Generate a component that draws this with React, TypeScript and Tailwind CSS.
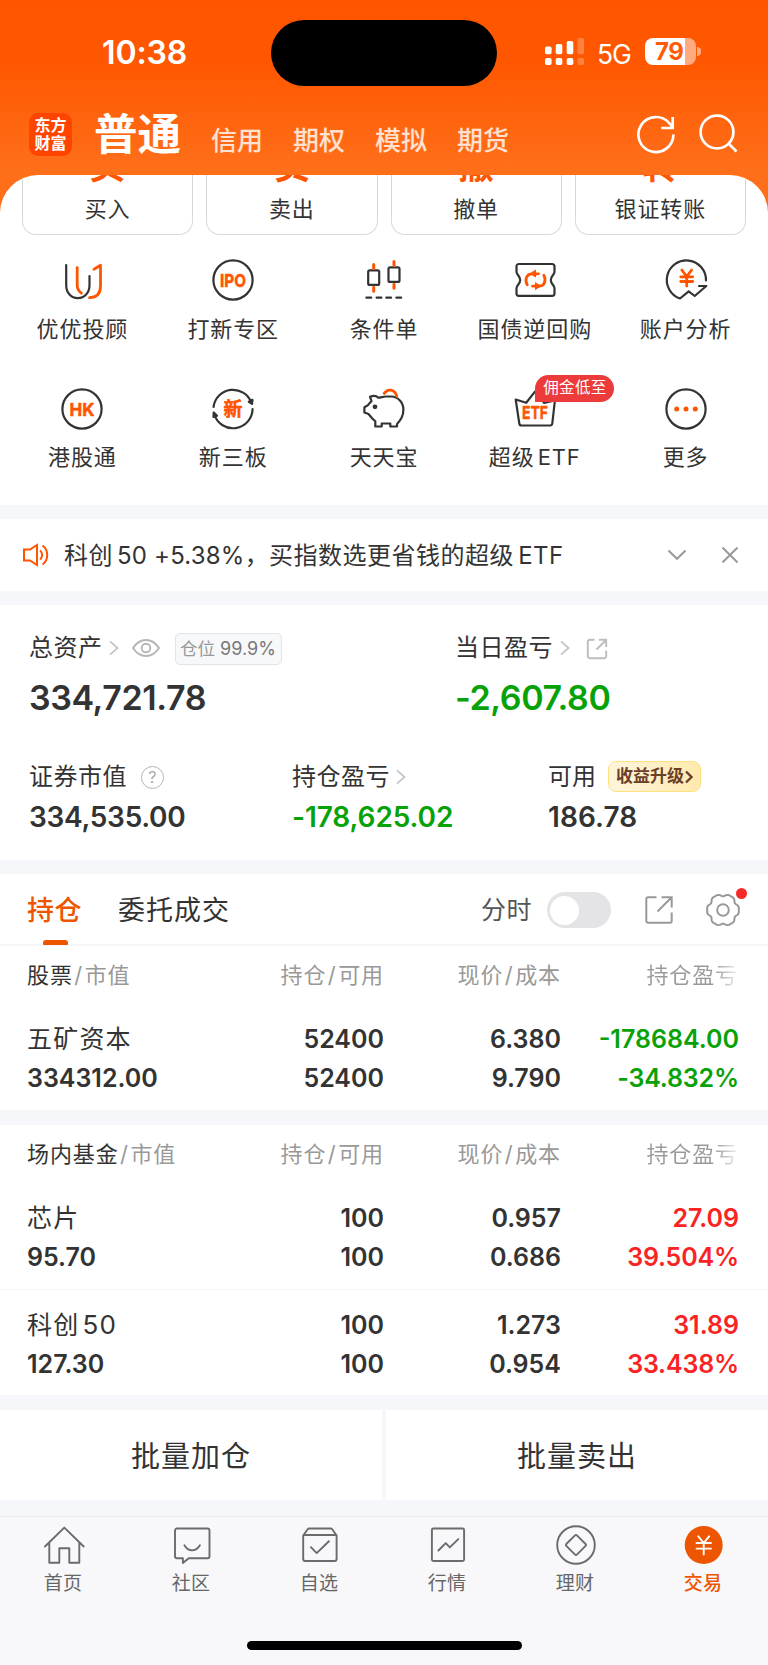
import type { ReactNode } from "react";

const DARK = "#333333";
const ORANGE = "#ff5500";

type Shortcut = {
  label: ReactNode;
  icon: ReactNode;
  badge?: string;
};

type Holding = {
  name: ReactNode;
  value: string;
  amount: string;
  available: string;
  price: string;
  cost: string;
  profit: string;
  rate: string;
  tone: string;
};

type TabItem = {
  label: string;
  icon: ReactNode;
  active?: boolean;
};

function Icon({ children, stroke = DARK, width = 2.2 }: { children: ReactNode; stroke?: string; width?: number }) {
  return (
    <svg
      viewBox="0 0 42 42"
      className="block h-[42px] w-[42px] overflow-visible"
      fill="none"
      stroke={stroke}
      strokeWidth={width}
      strokeLinecap="round"
      strokeLinejoin="round"
    >
      {children}
    </svg>
  );
}

function IconText({ children, width, size = 18, y = 27.6 }: { children: string; width: number; size?: number; y?: number }) {
  return (
    <text
      x="21"
      y={y}
      textAnchor="middle"
      textLength={width}
      lengthAdjust="spacingAndGlyphs"
      fill={ORANGE}
      stroke={ORANGE}
      strokeWidth="0.5"
      fontSize={size}
      fontWeight="700"
      fontFamily="Inter, 'Noto Sans CJK SC', sans-serif"
    >
      {children}
    </text>
  );
}

const shortcuts: Shortcut[] = [
  {
    label: "优优投顾",
    icon: (
      <Icon>
        <path d="M5.2 6v20c0 8 5 13.2 11.6 13.2S28.5 34 28.5 26v-9" />
        <path d="M16.2 8.6V26c0 4 1.8 6.5 4.2 8.2M33 10.2 39.5 6.2V27c0 7.500-4 11.500-11 11.700" stroke={ORANGE} strokeWidth="2.800" />
      </Icon>
    ),
  },
  {
    label: "打新专区",
    icon: (
      <Icon>
        <circle cx="21" cy="21" r="19.600" />
        <IconText width={26}>IPO</IconText>
      </Icon>
    ),
  },
  {
    label: "条件单",
    icon: (
      <Icon>
        <rect x="5.200" y="11.300" width="11" height="14.600" rx="1.500" />
        <rect x="25.500" y="8.300" width="11" height="14.600" rx="1.500" />
        <path d="M3.400 38.700h4.800M13.600 38.700h4.800M23.300 38.700h4.800M33.400 38.700h4.800" />
        <path d="M10.700 5.400v4M10.700 28.200v4M31 2.400v4M31 25.200v4" stroke={ORANGE} strokeWidth="3" />
      </Icon>
    ),
  },
  {
    label: "国债逆回购",
    icon: (
      <Icon>
        <path d="M4.800 5h33.400a2.300 2.300 0 0 1 2.300 2.300v5.500c0 3-3.700 4.200-3.700 8.200s3.700 5.200 3.700 8.200v5.300a2.300 2.300 0 0 1-2.300 2.300H4.800a2.300 2.300 0 0 1-2.300-2.300v-5.300c0-3 3.700-4.200 3.700-8.200s-3.700-5.200-3.700-8.200V7.300A2.300 2.300 0 0 1 4.800 5z" />
        <g stroke={ORANGE} strokeWidth="2.800">
          <path d="M13.200 25.800C10.500 20.500 12.500 14.800 18 14.800h6.500" />
          <path d="M29.800 16.200c2.700 5.300.700 11-4.800 11h-6.500" />
          <path d="M21.500 11.500v6.500l-4.600-3.200zM21.500 24v6.500l4.800-3.200z" fill={ORANGE} strokeWidth="1" />
        </g>
      </Icon>
    ),
  },
  {
    label: "账户分析",
    icon: (
      <Icon>
        <path d="M41 21.500A19.600 19.600 0 1 0 15 39.500L23.700 32.400 29.700 37 41.300 27H34" />
        <path d="m16.800 11 4.900 6.500 4.900-6.500M21.700 17.500v9.500M15.700 17.800h12M15.700 22.500h12" stroke={ORANGE} strokeWidth="2.800" />
      </Icon>
    ),
  },
  {
    label: "港股通",
    icon: (
      <Icon>
        <circle cx="21" cy="21" r="19.600" />
        <IconText width={25}>HK</IconText>
      </Icon>
    ),
  },
  {
    label: "新三板",
    icon: (
      <Icon>
        <path d="M1.500 19A19.600 19.600 0 0 1 39.300 14.500M40.600 21A19.600 19.600 0 0 1 2.300 26.500" />
        <path d="M36.800 13.800 40 15.800 40.500 11.800zM5 27.800 1.700 24.500 1.500 29z" fill={DARK} />
        <IconText width={19} size={19}>新</IconText>
      </Icon>
    ),
  },
  {
    label: "天天宝",
    icon: (
      <Icon>
        <path d="M7 8.800c3.400-1.300 6.300-1 8.300.9 3.200-.3 4.700-1.200 7.700-1.200h5c7.200.3 12.400 5.700 12.400 13.200 0 6.800-3 10.400-6.400 14.400V38.500h-6.700V35.500h-8.600v3h-6.400v-5.200L9.300 30.500 5.500 26 1.400 24.500v-5.300l3.100-1.600 4-4.600z" />
        <circle cx="12" cy="18.800" r="1.300" fill={DARK} />
        <path d="M21.200 5.400C24.500.500 31.500.800 33.700 8" stroke={ORANGE} strokeWidth="2.800" />
      </Icon>
    ),
  },
  {
    label: (
      <>
        超级<span className="ml-[3px]">ETF</span>
      </>
    ),
    badge: "佣金低至",
    icon: (
      <Icon>
        <path d="M1.700 11.500 12.200 14.800 21.200 3.400 30 14.800 40.900 12.500 38.300 35.500a2.300 2.300 0 0 1-2.200 2H7.500a2.300 2.300 0 0 1-2.200-2z" />
        <IconText width={26} y={31.3}>ETF</IconText>
      </Icon>
    ),
  },
  {
    label: "更多",
    icon: (
      <Icon>
        <circle cx="21" cy="21" r="19.600" />
        <g fill={ORANGE} stroke="none">
          <circle cx="11.700" cy="21" r="2.500" />
          <circle cx="21" cy="21" r="2.500" />
          <circle cx="30.300" cy="21" r="2.500" />
        </g>
      </Icon>
    ),
  },
];

const stocks: Holding[] = [
  {
    name: "五矿资本",
    value: "334312.00",
    amount: "52400",
    available: "52400",
    price: "6.380",
    cost: "9.790",
    profit: "-178684.00",
    rate: "-34.832%",
    tone: "text-[#07a207]",
  },
];

const funds: Holding[] = [
  {
    name: "芯片",
    value: "95.70",
    amount: "100",
    available: "100",
    price: "0.957",
    cost: "0.686",
    profit: "27.09",
    rate: "39.504%",
    tone: "text-[#fa2323]",
  },
  {
    name: (
      <>
        科创<span className="ml-[3px] text-[26px]">50</span>
      </>
    ),
    value: "127.30",
    amount: "100",
    available: "100",
    price: "1.273",
    cost: "0.954",
    profit: "31.89",
    rate: "33.438%",
    tone: "text-[#fa2323]",
  },
];

const tabs: TabItem[] = [
  {
    label: "首页",
    icon: (
      <Icon stroke="#6b6b6b" width={1.9}>
        <path d="M2 22.500 21.300 3.600 40.700 22.500M6.300 18.700v20h10V24.300h10v14.400h10v-20" />
      </Icon>
    ),
  },
  {
    label: "社区",
    icon: (
      <Icon stroke="#6b6b6b" width={1.9}>
        <path d="M6 4.500h30.500a2 2 0 0 1 2 2v25.700a2 2 0 0 1-2 2H17.700L11.900 39v-4.800H6a2 2 0 0 1-2-2V6.500a2 2 0 0 1 2-2zM13.400 21.300c4 6.800 11.400 6.800 15.500 0" />
      </Icon>
    ),
  },
  {
    label: "自选",
    icon: (
      <Icon stroke="#6b6b6b" width={1.9}>
        <path d="M4.200 11.500 8.700 5.300a2 2 0 0 1 1.600-.8h21.300a2 2 0 0 1 1.600.8l4.400 6.200V35a2 2 0 0 1-2 2H6.200a2 2 0 0 1-2-2zM4.500 11h33M11.900 23.200l5.800 5.900L29.900 17.200" />
      </Icon>
    ),
  },
  {
    label: "行情",
    icon: (
      <Icon stroke="#6b6b6b" width={1.9}>
        <rect x="4.900" y="4.500" width="32.200" height="32.500" rx="1.500" />
        <path d="m11.400 26.500 7.300-7.300 4.100 4.200 8.500-8.300" />
      </Icon>
    ),
  },
  {
    label: "理财",
    icon: (
      <Icon stroke="#6b6b6b" width={1.9}>
        <circle cx="21" cy="21" r="18.800" />
        <path d="M20 11.300a1.300 1.300 0 0 1 1.900 0l8.700 8.700a1.300 1.300 0 0 1 0 1.900l-8.700 8.700a1.300 1.300 0 0 1-1.900 0l-8.700-8.700a1.300 1.300 0 0 1 0-1.900z" />
      </Icon>
    ),
  },
  {
    label: "交易",
    active: true,
    icon: (
      <Icon stroke="#ffffff" width={1.9}>
        <circle cx="20.700" cy="21" r="19" fill="#ee5500" stroke="none" />
        <path d="m15.300 12.300 5.400 6.700 5.400-6.700M20.700 19v11.500M13.500 19h14.500M13.500 24.600h14.500" />
      </Icon>
    ),
  },
];

// Wavy six-lobed outline of the settings gear
const gearPath = Array.from({ length: 120 }, (_, i) => {
  const angle = (i / 120) * Math.PI * 2;
  const radius = 15.2 + 1.05 * Math.cos(angle * 6) - 0.45 * Math.cos(angle * 12);
  const x = (18 + radius * Math.cos(angle)).toFixed(2);
  const y = (18 + radius * Math.sin(angle)).toFixed(2);
  return `${i === 0 ? "M" : "L"}${x} ${y}`;
}).join("") + "Z";

function Arrow() {
  return (
    <svg viewBox="0 0 10 16" className="h-4 w-2.5 shrink-0" fill="none" stroke="#c4c4c4" strokeWidth="1.700">
      <path d="m1 1.300 7.600 6.700L1 14.700" />
    </svg>
  );
}

function StatusBar() {
  return (
    <div className="flex h-[105px] items-start">
      <div className="ml-[102px] mt-[33px] w-[169px] text-[32px] font-semibold leading-10 tracking-[-0.1px]">10:38</div>
      <div className="mt-5 h-[66px] w-[226px] rounded-full bg-black" />
      <svg viewBox="0 0 40 28" className="ml-12 mt-[38px] h-7 w-10 shrink-0" fill="#ffffff">
        <rect y="8.500" width="6.600" height="7.800" rx="1.800" />
        <rect y="20" width="6.600" height="7" rx="1.800" />
        <rect x="10.700" y="6" width="6.600" height="10.300" rx="1.800" />
        <rect x="10.700" y="20" width="6.600" height="7" rx="1.800" />
        <rect x="21.700" y="3" width="6.600" height="13.300" rx="1.800" />
        <rect x="21.700" y="20" width="6.600" height="7" rx="1.800" />
        <rect x="32.500" width="6.600" height="16.300" rx="1.800" opacity=".25" />
        <rect x="32.500" y="20" width="6.600" height="7" rx="1.800" opacity=".25" />
      </svg>
      <div className="ml-3 mt-[38px] w-[48px] text-[26.500px] leading-8 tracking-[-1px]">5G</div>
      <div className="mt-[38px] flex h-[27px] w-[51px] items-center overflow-hidden rounded-[8px] bg-[linear-gradient(90deg,#fff_40px,#ffab80_40px)]">
        <span className="ml-[10px] text-[24px] font-bold leading-none tracking-[-0.5px] text-[#ff5a05]">79</span>
      </div>
      <div className="ml-[1px] mt-[47px] h-[9px] w-1 rounded-r-full bg-[#ffab80]" />
    </div>
  );
}

function Header() {
  return (
    <header className="h-[215px] bg-[linear-gradient(180deg,#ff5500_0,#ff5700_60px,#ff6f1a_170px)] text-white">
      <StatusBar />
      <div className="flex items-start">
        <div className="ml-[29px] mt-2 h-[43px] w-[43px] rounded-[9px] bg-[#ff4400] pt-[3px] text-center text-[16px] font-bold leading-[18px]">
          东方
          <br />
          财富
        </div>
        <div className="ml-[22px] mt-[5px] w-[117px] text-[43.500px] font-bold leading-[48px]">普通</div>
        <nav className="mt-[20px] flex gap-[30px] text-[26px] font-medium leading-8 text-white/80">
          <span>信用</span>
          <span>期权</span>
          <span>模拟</span>
          <span>期货</span>
        </nav>
        <svg viewBox="0 0 40 40" className="ml-[127px] mt-[9px] h-10 w-10" fill="none" stroke="#ffffff" strokeWidth="2.700">
          <path d="M37.400 20.500A17.500 17.500 0 1 1 33.500 9.500L36.500 13.200M36.700 3v11H25.300" />
        </svg>
        <svg viewBox="0 0 40 40" className="ml-[23px] mt-[9px] h-10 w-10" fill="none" stroke="#ffffff" strokeWidth="2.700">
          <circle cx="18" cy="18" r="16.400" />
          <path d="m28.800 28.800 8.700 8.700" />
        </svg>
      </div>
    </header>
  );
}

function TradeCards() {
  const cards = [
    ["买", "买入"],
    ["卖", "卖出"],
    ["撤", "撤单"],
    ["转", "银证转账"],
  ];
  return (
    <div className="grid grid-cols-4 gap-[13px] px-[22px]">
      {cards.map(([glyph, label]) => (
        <div
          key={label}
          className="flex h-[60px] flex-col items-center justify-end gap-[14px] overflow-hidden rounded-b-[14px] border border-t-0 border-[#d8d8d8] pb-[14px]"
        >
          <span className="shrink-0 text-[36px] font-bold leading-none text-[#ff5500]">{glyph}</span>
          <span className="shrink-0 text-[22px] leading-none tracking-[0.9px]">{label}</span>
        </div>
      ))}
    </div>
  );
}

function Shortcuts() {
  return (
    <div className="grid h-[270px] grid-cols-5 content-start gap-y-[46px] px-[7px] pt-6">
      {shortcuts.map((item, index) => (
        <div key={index} className="relative flex flex-col items-center">
          {item.icon}
          <span className="mb-[1px] mt-[15.500px] whitespace-nowrap text-[22px] leading-6 tracking-[0.9px]">{item.label}</span>
          {item.badge ? (
            <span className="absolute -top-[13px] left-[76px] flex h-[27px] w-[79px] items-center justify-center rounded-[13.500px] rounded-bl-none bg-[#ec3b3b] text-[15.500px] leading-none tracking-[0.3px] text-white">
              {item.badge}
            </span>
          ) : null}
        </div>
      ))}
    </div>
  );
}

function Notice() {
  return (
    <div className="flex h-[72px] items-center bg-white pl-[23px]">
      <svg viewBox="0 0 26 22" className="h-[22px] w-[26px] overflow-visible" fill="none" stroke="#ff5500" strokeWidth="2">
        <path d="M1 5.500h6L14 1v20l-7-4.500H1zM17 6.500c2.800 2 2.800 7 0 9M19.500 1.500c6.300 4.500 6.300 14.500 0 19" />
      </svg>
      <p className="ml-[15px] mt-[2px] w-[604px] whitespace-nowrap text-[24px] leading-8 tracking-[0.500px]">
        科创<span className="ml-[4px] tracking-[0.2px]">50 +5.38%</span>，买指数选更省钱的超级<span className="ml-1">ETF</span>
      </p>
      <svg viewBox="0 0 18 12" className="h-3 w-[18px]" fill="none" stroke="#999999" strokeWidth="2">
        <path d="m.5 1.500 8.500 8.300 8.500-8.300" />
      </svg>
      <svg viewBox="0 0 16 16" className="ml-[36px] h-4 w-4" fill="none" stroke="#999999" strokeWidth="2">
        <path d="m.5.5 15 15M15.500.5l-15 15" />
      </svg>
    </div>
  );
}

function Assets() {
  return (
    <section className="mt-[14px] h-[255px] bg-white pl-[29px] pt-[27px] text-[24px] leading-8">
      <div className="flex">
        <div className="w-[426px]">
          <div className="flex h-8 items-center tracking-[0.500px]">
            总资产
            <span className="ml-[6px] flex"><Arrow /></span>
            <svg viewBox="0 0 28 20" className="ml-[13px] h-5 w-7" fill="none" stroke="#b5b5b5" strokeWidth="1.900">
              <path d="M1 10C8-.700 20-.700 27 10 20 20.700 8 20.700 1 10z" />
              <circle cx="14" cy="10" r="4.300" />
            </svg>
            <span className="ml-[15px] mt-[1px] flex h-8 w-[107px] items-center justify-center whitespace-nowrap rounded-[5px] border border-[#e3e4e8] bg-[#f7f8fa] text-[17.500px] tracking-normal text-[#999]">
              仓位<span className="ml-[5px] text-[18px] text-[#777]">99.9%</span>
            </span>
          </div>
          <div className="mt-4 text-[34px] font-semibold leading-[36px] tracking-[-0.400px]">334,721.78</div>
        </div>
        <div>
          <div className="flex h-8 items-center tracking-[0.500px]">
            当日盈亏
            <span className="ml-[7px] flex"><Arrow /></span>
            <svg viewBox="0 0 20 20" className="ml-[17px] mt-[2px] h-5 w-5 overflow-visible" fill="none" stroke="#bdbdbd" strokeWidth="1.900">
              <path d="M7.500.800H3A2.200 2.200 0 0 0 .800 3v14A2.200 2.200 0 0 0 3 19.200h14a2.200 2.200 0 0 0 2.200-2.200v-5.500M12 .800h7.200V8M19 1 9.500 10.500" />
            </svg>
          </div>
          <div className="mt-4 text-[34px] font-semibold leading-[36px] tracking-[-0.400px] text-[#07a207]">-2,607.80</div>
        </div>
      </div>

      <div className="mt-[45px] flex">
        <div className="w-[263px]">
          <div className="flex h-8 items-center tracking-[0.500px]">
            证券市值
            <span className="ml-[14px] flex h-[23px] w-[23px] items-center justify-center rounded-full border-[1.500px] border-[#b5b5b5] text-[16px] leading-none text-[#aaa]">
              ?
            </span>
          </div>
          <div className="mt-2 text-[28px] font-semibold tracking-[-0.300px]">334,535.00</div>
        </div>
        <div className="w-[256px]">
          <div className="flex h-8 items-center tracking-[0.500px]">
            持仓盈亏
            <span className="ml-[6px] flex"><Arrow /></span>
          </div>
          <div className="mt-2 text-[28px] font-semibold tracking-[-0.100px] text-[#07a207]">-178,625.02</div>
        </div>
        <div>
          <div className="flex h-8 items-center">
            可用
            <span className="-mt-[1px] ml-[12px] flex h-[31px] w-[93px] items-center justify-center whitespace-nowrap rounded-[8px] border-[1.500px] border-[#ffe27c] bg-gradient-to-r from-[#fff5dc] to-[#ffe9ae] text-[17px] font-bold leading-none text-[#6b4027]">
              收益升级
              <svg viewBox="0 0 8 14" className="ml-[1px] h-[14px] w-2" fill="none" stroke="#6b4027" strokeWidth="2.300">
                <path d="m1 1.500 5.500 5.500L1 12.500" />
              </svg>
            </span>
          </div>
          <div className="mt-2 text-[28px] font-semibold tracking-[0.100px]">186.78</div>
        </div>
      </div>
    </section>
  );
}

function PositionTabs() {
  return (
    <div className="flex h-[72px] items-center border-b-2 border-[#f5f6f7] bg-white pt-[2px] text-[27px]">
      <div className="relative ml-[27px] pt-[1px] font-medium leading-9 tracking-[0.500px] text-[#ee5500]">
        持仓
        <i className="absolute -bottom-[16px] left-[16px] h-[5px] w-[25px] rounded-t-[3px] rounded-b-[1px] bg-[#ee5500]" />
      </div>
      <div className="ml-9 pt-[1px] leading-9 tracking-[1px]">委托成交</div>
      <div className="ml-auto text-[25px] leading-9 tracking-[0.500px] text-[#555]">分时</div>
      <div className="ml-[15px] flex h-9 w-16 items-center rounded-full bg-[#e4e4e7] pl-[3px]">
        <span className="h-[29px] w-[29px] rounded-full bg-white" />
      </div>
      <svg viewBox="0 0 28 28" className="ml-[34px] h-7 w-7" fill="none" stroke="#999999" strokeWidth="2">
        <path d="M11.500 1.300H3a1.700 1.700 0 0 0-1.700 1.700v22A1.700 1.700 0 0 0 3 26.700h22a1.700 1.700 0 0 0 1.700-1.700v-8.500M16.500 1.300h10.200v10.200M26.200 1.800 12.500 15.500" />
      </svg>
      <div className="relative ml-8 mr-[27px]">
        <svg viewBox="0 0 36 36" className="h-9 w-9" fill="none" stroke="#999999" strokeWidth="2">
          <path d={gearPath} />
          <circle cx="18" cy="18" r="5.800" />
        </svg>
        <i className="absolute -top-[4px] right-[-6px] h-[11px] w-[11px] rounded-full bg-[#f72a2a]" />
      </div>
    </div>
  );
}

function Slash() {
  return <span className="mx-[1.500px]">/</span>;
}

function HoldingTable({ title, rows }: { title: string; rows: Holding[] }) {
  return (
    <section className="bg-white">
      <div className="grid h-[58px] grid-cols-[201px_156px_177px_177px] items-center pl-[27px] text-right text-[22px] tracking-[0.900px] text-[#999]">
        <span className="text-left">
          <span className="text-[#333]">{title}</span>
          <Slash />
          市值
        </span>
        <span>持仓<Slash />可用</span>
        <span>现价<Slash />成本</span>
        <span className="bg-[linear-gradient(90deg,#999_153px,#99999922_177px)] bg-clip-text text-transparent">持仓盈亏</span>
      </div>
      {rows.map((row, index) => (
        <div
          key={row.value}
          className={`grid h-[106px] grid-cols-[201px_156px_177px_178px] content-start pl-[27px] pt-[16px] text-right text-[25px] font-semibold leading-[38.500px] ${
            index > 0 ? "border-t border-[#f5f6f7]" : ""
          }`}
        >
          <span className="text-left font-normal tracking-[1.200px]">{row.name}</span>
          <span>{row.amount}</span>
          <span>{row.price}</span>
          <span className={row.tone}>{row.profit}</span>
          <span className="text-left">{row.value}</span>
          <span>{row.available}</span>
          <span>{row.cost}</span>
          <span className={`tracking-[-0.150px] ${row.tone}`}>{row.rate}</span>
        </div>
      ))}
    </section>
  );
}

function TabBar() {
  return (
    <footer className="mt-4 h-[149px] border-t border-[#e6e8eb] bg-[#f8f8fb]">
      <div className="grid grid-cols-6 pt-[7px]">
        {tabs.map((tab) => (
          <div key={tab.label} className="flex flex-col items-center">
            {tab.icon}
            <span
              className={`mr-[2px] mt-[6px] text-[19px] leading-6 tracking-[0.300px] ${
                tab.active ? "font-medium text-[#ee5500]" : "text-[#666]"
              }`}
            >
              {tab.label}
            </span>
          </div>
        ))}
      </div>
      <div className="mx-auto mt-[45px] h-[9px] w-[275px] rounded-full bg-black" />
    </footer>
  );
}

export default function App() {
  return (
    <div className="h-[1665px] w-[768px] overflow-hidden bg-[#f5f7fa] font-[Inter,'Noto_Sans_CJK_SC',sans-serif] text-[#333]">
      <Header />
      <main className="-mt-10">
        <section className="mb-[14px] overflow-hidden rounded-t-[38px] bg-white">
          <TradeCards />
          <Shortcuts />
        </section>
        <Notice />
        <Assets />
        <div className="mt-[14px]">
          <PositionTabs />
          <HoldingTable title="股票" rows={stocks} />
        </div>
        <div className="mt-[15px]">
          <HoldingTable title="场内基金" rows={funds} />
        </div>
        <div className="mt-[15px] grid h-[90px] grid-cols-2 gap-1 text-[29px] tracking-[1px]">
          <div className="flex items-center justify-center bg-white pt-[3px]">批量加仓</div>
          <div className="flex items-center justify-center bg-white pt-[3px]">批量卖出</div>
        </div>
      </main>
      <TabBar />
    </div>
  );
}
